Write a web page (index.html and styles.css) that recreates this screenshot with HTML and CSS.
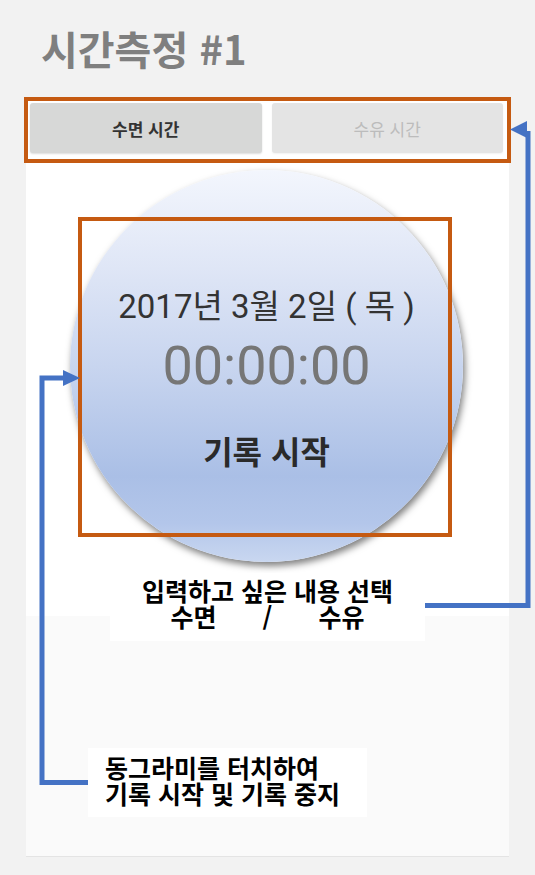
FILE: index.html
```html
<!DOCTYPE html>
<html lang="ko">
<head>
<meta charset="utf-8">
<title>시간측정 #1</title>
<link rel="stylesheet" href="styles.css">
</head>
<body>
<div class="page">
  <h1 class="title">시간측정 #1</h1>
  <div class="panel">
    <div class="tabs">
      <div class="tab active">수면 시간</div>
      <div class="tab">수유 시간</div>
    </div>
    <div class="stage">
      <div class="circle">
        <div class="date">2017년 3월 2일 ( 목 )</div>
        <div class="time">00:00:00</div>
        <div class="start">기록 시작</div>
      </div>
    </div>
    <div class="lower"></div>
  </div>

  <div class="hl hl-tabs"></div>
  <div class="hl hl-circle"></div>

  <svg class="arrows" width="535" height="875" viewBox="0 0 535 875">
    <polyline points="425,605.5 528,605.5 528,131" fill="none" stroke="#4472c4" stroke-width="5"/>
    <polygon points="510,129.5 527,121 527,138" fill="#4472c4"/>
    <polyline points="88,782.5 42,782.5 42,378 64,378" fill="none" stroke="#4472c4" stroke-width="5"/>
    <polygon points="80,378 63,370 63,386" fill="#4472c4"/>
  </svg>

  <div class="note note-tabs">
    <div class="note-line">입력하고 싶은 내용 선택</div>
    <div class="note-line note-split"><span>수면</span><span>/</span><span>수유</span></div>
  </div>
  <div class="note note-circle">
    <div class="note-line">동그라미를 터치하여</div>
    <div class="note-line">기록 시작 및 기록 중지</div>
  </div>
</div>
</body>
</html>
```
FILE: styles.css
```css
html, body {
  margin: 0;
  padding: 0;
  background: #f2f2f2;
}
.page {
  position: relative;
  width: 535px;
  height: 875px;
  overflow: hidden;
  font-family: "Noto Sans CJK KR", "Noto Sans", sans-serif;
}
.title {
  margin: 0 0 28px 0;
  padding: 24px 0 0 41px;
  font-size: 40px;
  line-height: 48px;
  font-weight: 700;
  color: #7f7f7f;
}
.panel {
  margin-left: 26px;
  width: 483px;
  background: #ffffff;
}
.tabs {
  display: flex;
  gap: 10px;
  padding: 3px 6px 7px 4px;
}
.tab {
  flex: 1;
  height: 50px;
  display: flex;
  align-items: center;
  justify-content: center;
  border-radius: 3px;
  background: #e4e4e4;
  color: #bcbcbc;
  font-size: 17px;
  box-shadow: 0 1px 2px rgba(0,0,0,0.06);
}
.tab.active {
  background: #d7d8d7;
  color: #333333;
  font-weight: 700;
  box-shadow: 0 1px 2px rgba(0,0,0,0.14);
}
.stage {
  display: flex;
  justify-content: center;
  padding: 10px 0 54px 0;
}
.circle {
  width: 393px;
  height: 392px;
  border-radius: 50%;
  margin-right: 2px;
  background: linear-gradient(180deg, #f3f6fd 0%, #dfe6f6 25%, #c8d5ef 50%, #aabfe6 78%, #b3c6ea 90%, #c9d7f0 100%);
  box-shadow: 2px 4px 7px rgba(0,0,0,0.5);
  display: flex;
  flex-direction: column;
  align-items: center;
  padding-top: 117px;
  box-sizing: border-box;
  font-family: Roboto, "Noto Sans CJK KR", sans-serif;
}
.date {
  font-size: 33px;
  line-height: 40px;
  color: #333333;
}
.time {
  margin-top: 9px;
  font-size: 54px;
  line-height: 60px;
  color: #767676;
}
.start {
  margin-top: 34px;
  font-size: 32px;
  line-height: 40px;
  font-weight: 700;
  color: #2a2a2a;
  font-family: "Noto Sans CJK KR", sans-serif;
}
.lower {
  height: 240px;
  background: #fafafa;
  border-bottom: 1px solid #e4e4e4;
}
.hl {
  position: absolute;
  box-sizing: border-box;
  border: 4px solid #c55a11;
}
.hl-tabs {
  left: 24px;
  top: 97px;
  width: 487px;
  height: 66px;
}
.hl-circle {
  left: 78px;
  top: 217px;
  width: 374px;
  height: 320px;
}
.arrows {
  position: absolute;
  left: 0;
  top: 0;
  pointer-events: none;
}
.note {
  position: absolute;
  box-sizing: border-box;
  background: #ffffff;
  color: #000000;
  font-size: 25px;
  line-height: 26px;
  font-weight: 700;
}
.note-tabs {
  left: 110px;
  top: 573px;
  width: 315px;
  height: 68px;
  padding-top: 4px;
  text-align: center;
}
.note-split {
  display: flex;
  justify-content: center;
  gap: 46px;
}
.note-circle {
  left: 88px;
  top: 748px;
  width: 279px;
  height: 69px;
  padding: 6px 0 0 17px;
}
```
